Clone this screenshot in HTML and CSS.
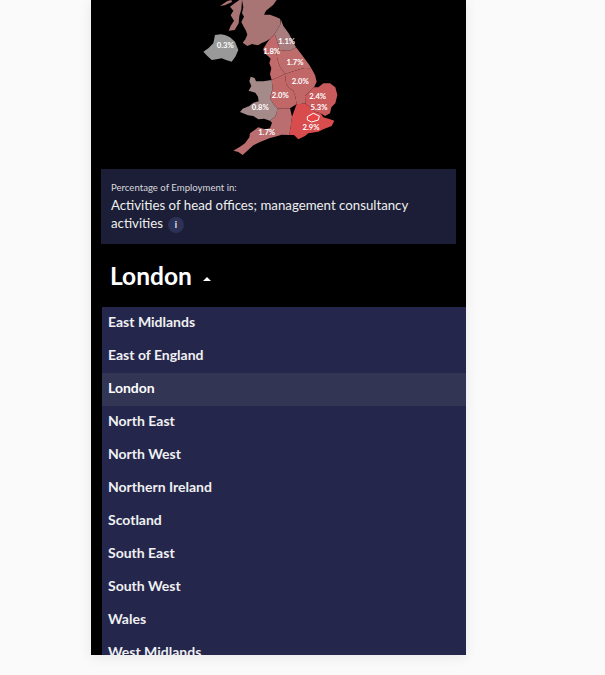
FILE: index.html
```html
<html>
	<head>
		<link rel="stylesheet" href="styles.css">
	</head>
	<body>
		<div class="card">
			<svg class="map" viewBox="0 0 480 480" width="160" height="160">
				<g class="regions">
					<path fill="#a87474" d="M156,0 L260,0 L250,14 L238,24 L228,32 L222,44 L240,44 L256,50 L270,56 L272,72 L262,88 L254,102 L240,116 L228,124 L214,130 L204,136 L186,132 L172,138 L158,128 L166,118 L172,104 L168,92 L160,78 L154,66 L162,50 L156,40 L160,22 Z"/>
					<path fill="#a87474" d="M116,92 L122,78 L132,62 L122,46 L130,32 L120,20 L134,10 L148,0 L156,0 L154,28 L148,48 L146,70 L134,90 Z"/>
					<path fill="#a87474" d="M90,18 L102,10 L112,3 L124,0 L126,6 L104,16 Z"/>
					<path fill="#a97c7e" d="M272,57 L280,78 L296,100 L308,122 L318,142 L300,152 L284,152 L270,150 L262,125 L254,102 L262,88 L272,72 Z"/>
					<path fill="#c06a6c" d="M240,116 L254,102 L262,125 L270,150 L260,160 L262,178 L270,200 L285,222 L265,232 L245,240 L240,222 L244,205 L238,190 L242,176 L234,168 L222,158 L220,146 L230,130 Z"/>
					<path fill="#bf6c6c" d="M270,150 L284,152 L300,152 L318,142 L336,165 L345,178 L358,195 L364,205 L345,204 L335,206 L310,214 L285,222 L270,200 L262,178 L260,160 Z"/>
					<path fill="#c26768" d="M285,222 L310,214 L335,206 L345,204 L364,205 L375,225 L380,245 L372,262 L355,278 L345,288 L346,310 L332,312 L320,312 L316,290 L310,272 L295,262 L288,250 Z"/>
					<path fill="#c26768" d="M245,240 L265,232 L285,222 L288,250 L295,262 L310,272 L316,290 L320,312 L300,325 L280,326 L262,325 L250,312 L240,295 L244,280 L248,265 Z"/>
					<path fill="#a58a8a" d="M182,230 L194,234 L198,244 L220,244 L245,240 L248,265 L244,280 L240,295 L250,312 L262,325 L260,340 L255,350 L240,362 L222,356 L205,358 L190,348 L174,346 L150,336 L158,326 L178,318 L190,308 L206,304 L204,290 L196,278 L176,272 L184,258 L178,244 Z"/>
					<path fill="#c95b5d" d="M372,262 L385,262 L400,250 L420,250 L436,262 L442,285 L436,310 L424,322 L420,340 L405,348 L392,340 L375,335 L360,322 L346,310 L345,288 L355,278 Z"/>
					<path fill="#d84c4e" d="M320,312 L332,312 L346,310 L360,322 L375,335 L392,340 L400,352 L420,358 L433,362 L425,378 L400,388 L385,395 L355,400 L345,408 L325,418 L312,405 L298,405 L302,380 L306,350 Z"/>
					<path fill="#ba6e70" d="M262,325 L280,326 L300,325 L306,350 L302,380 L298,405 L275,404 L255,410 L240,414 L225,420 L205,428 L190,436 L172,452 L158,465 L145,456 L130,452 L150,440 L165,430 L178,412 L180,400 L205,382 L225,388 L240,385 L246,368 L240,362 L255,350 L260,340 Z"/>
					<path fill="#999999" d="M75,105 L92,103 L105,105 L120,112 L135,125 L145,150 L136,170 L125,185 L108,180 L95,175 L80,178 L65,180 L52,168 L40,155 L55,145 L70,130 Z"/>
					<path class="london" fill="#e84345" d="M352,350 L370,340 L388,348 L385,360 L365,366 L352,360 Z"/>
				</g>
				<g class="labels">
					<text x="106" y="143">0.3%</text>
					<text x="290" y="133">1.1%</text>
					<text x="245" y="161">1.8%</text>
					<text x="315" y="194">1.7%</text>
					<text x="331" y="251">2.0%</text>
					<text x="271" y="295">2.0%</text>
					<text x="383" y="298">2.4%</text>
					<text x="387" y="331">5.3%</text>
					<text x="211" y="329">0.8%</text>
					<text x="363" y="389">2.9%</text>
					<text x="230" y="404">1.7%</text>
				</g>
			</svg>
			<div class="panel">
				<div class="panel-label">Percentage of Employment in:</div>
				<div class="panel-title">Activities of head offices; management consultancy activities<span class="info">i</span></div>
			</div>
			<div class="heading">London <span class="caret"></span></div>
			<div class="list">
				<div class="row">East Midlands</div>
				<div class="row">East of England</div>
				<div class="row active">London</div>
				<div class="row">North East</div>
				<div class="row">North West</div>
				<div class="row">Northern Ireland</div>
				<div class="row">Scotland</div>
				<div class="row">South East</div>
				<div class="row">South West</div>
				<div class="row">Wales</div>
				<div class="row">West Midlands</div>
			</div>
		</div>
	</body>
</html>
```

FILE: styles.css
```css
*{
	box-sizing: border-box;
}
html,body{
	margin: 0;
	height: 100%;
	background: #fafafa;
	overflow: hidden;
	font-family: Lato, "Open Sans", sans-serif;
}
.card{
	width: 375px;
	height: 655px;
	margin-left: 91px;
	background: #000;
	color: #fff;
	overflow: hidden;
	box-shadow: 0 2px 12px rgba(0,0,0,0.08);
}
.map{
	display: block;
	margin-left: 99px;
}
.labels text{
	fill: #fff;
	font-size: 23px;
	font-weight: 700;
	text-anchor: middle;
}
.london{
	stroke: #fff;
	stroke-width: 3;
}
.panel{
	width: 355px;
	height: 75px;
	margin: 9px 0 0 10px;
	padding: 12px 10px 0;
	background: #1b1e36;
}
.panel-label{
	font-size: 9.6px;
	line-height: 13px;
	color: #d8d8dc;
}
.panel-title{
	margin-top: 2px;
	font-size: 13.25px;
	line-height: 18px;
	color: #eeeeee;
}
.info{
	display: inline-block;
	width: 16px;
	height: 16px;
	margin-left: 5px;
	border-radius: 50%;
	background: #2d3157;
	font-size: 9px;
	font-weight: 700;
	line-height: 16px;
	text-align: center;
}
.heading{
	height: 63px;
	padding: 17px 0 0 19px;
	font-size: 24.5px;
	font-weight: 700;
	line-height: 30px;
}
.caret{
	display: inline-block;
	width: 0;
	height: 0;
	margin-left: 5px;
	vertical-align: 4px;
	border-left: 4px solid transparent;
	border-right: 4px solid transparent;
	border-bottom: 4px solid #fff;
}
.list{
	margin-left: 11px;
	background: #24274b;
}
.row{
	height: 33px;
	padding-left: 6px;
	font-size: 14px;
	font-weight: 700;
	line-height: 29px;
	color: #f0f0f2;
}
.active{
	background: #333555;
	color: #fff;
}
```
